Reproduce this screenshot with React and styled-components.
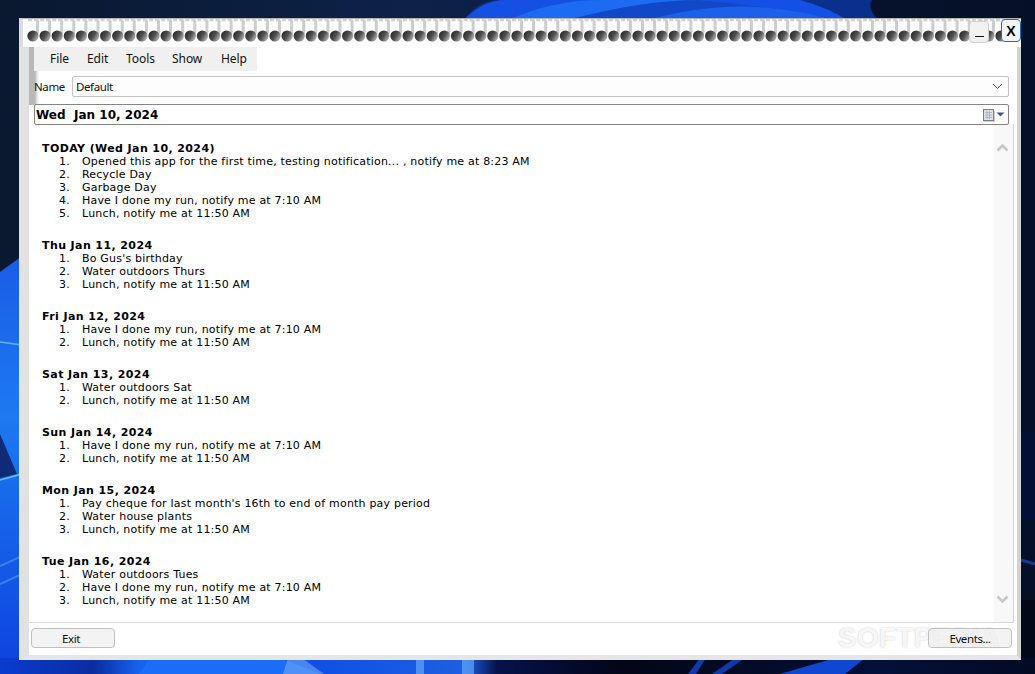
import React from "react";
import styled, { createGlobalStyle } from "styled-components";

const Global = createGlobalStyle`
  html, body { margin: 0; padding: 0; width: 1035px; height: 674px; overflow: hidden; background: #07142c; }
`;

const Desktop = styled.div`
  position: relative;
  width: 1035px;
  height: 674px;
  overflow: hidden;
`;

const Window = styled.div`
  position: absolute;
  left: 19px;
  top: 18px;
  width: 1002px;
  height: 642px;
  display: flex;
  flex-direction: column;
  background: #fff;
`;

const Spiral = styled.div`
  position: relative;
  height: 29px;
  flex: none;
  background: #fff;
  border-top: 1px solid #b4b4b4;
  border-left: 4px solid #dcdcdc;
  box-sizing: border-box;
`;

const Frame = styled.div`
  flex: 1;
  min-height: 0;
  display: flex;
  flex-direction: column;
  box-sizing: border-box;
  border-left: 10px solid #e2e2e2;
  border-right: 4px solid #d2d2d2;
  border-bottom: 5px solid #e6e6e6;
  background:
    linear-gradient(90deg, #b8b8b8 0, #b8b8b8 6px, #e4e4e4 8px, #ffffff 10px) 0 0 / 10px 58px no-repeat,
    #fff;
`;

const TitleButtons = styled.div`
  position: absolute;
  right: 0;
  top: 0;
  display: flex;
  align-items: flex-start;
  gap: 12px;
`;

const TitleButton = styled.button`
  box-sizing: border-box;
  padding: 0;
  display: flex;
  align-items: center;
  justify-content: center;
  font-family: "Liberation Sans", sans-serif;
  font-weight: 700;
  color: #000;
  border-radius: 4px;
  width: 20px;
  height: ${(p) => (p.$close ? "23px" : "22px")};
  margin-top: ${(p) => (p.$close ? "0" : "2px")};
  font-size: 14px;
  background: ${(p) => (p.$close ? "#f2f6fb" : "#f2f2f2")};
  border: 1px solid ${(p) => (p.$close ? "#0a73cf" : "#cfcfcf")};
`;

const Dash = styled.span`
  display: block;
  width: 9px;
  height: 1px;
  margin-top: 8px;
  background: #111;
`;

const MenuBar = styled.div`
  display: flex;
  align-items: center;
  flex: none;
  box-sizing: border-box;
  width: 223px;
  height: 24px;
  margin-left: 5px;
  padding: 0 0 2px 16px;
  background: #f0f0f0;
  font: 12px "Noto Sans", sans-serif;
  letter-spacing: -0.05px;
  color: #111;
`;

const MenuItem = styled.span`
  width: ${(p) => p.$w}px;
`;

const NameRow = styled.div`
  display: flex;
  align-items: center;
  height: 21px;
  margin: 5px 0 0 5px;
  flex: none;
`;

const NameLabel = styled.label`
  width: 38px;
  font: 11.5px "Noto Sans", sans-serif;
  letter-spacing: -0.4px;
  color: #111;
`;

const NameSelect = styled.div`
  box-sizing: border-box;
  width: 937px;
  height: 21px;
  display: flex;
  align-items: center;
  justify-content: space-between;
  padding: 0 5px 0 3px;
  background: #fdfdfd;
  border: 1px solid #c4c4c4;
  border-radius: 2px;
  font: 11.5px "Noto Sans", sans-serif;
  letter-spacing: -0.4px;
  color: #111;
`;

const DateRow = styled.div`
  box-sizing: border-box;
  flex: none;
  width: 975px;
  height: 21px;
  margin: 7px 0 0 5px;
  display: flex;
  align-items: center;
  justify-content: space-between;
  padding: 1px 3px 0 1px;
  background: #fff;
  border: 1px solid #858585;
  border-radius: 2px;
  font: 700 12px "DejaVu Sans", sans-serif;
  letter-spacing: 0.02px;
  color: #000;
  white-space: pre;
  position: relative;
  z-index: 1;
`;

const Panel = styled.div`
  box-sizing: border-box;
  flex: none;
  width: 985px;
  height: 499px;
  margin-top: -1px;
  display: flex;
  background: #fff;
  border-right: 1px solid #d4d4d4;
  border-bottom: 1px solid #d4d4d4;
`;

const Agenda = styled.div`
  flex: 1;
  min-width: 0;
  padding: 18px 0 0 13px;
  font: 11px/13px "DejaVu Sans", Verdana, sans-serif;
  letter-spacing: 0.2px;
  color: #000;
`;

const Day = styled.section`
  margin-bottom: 19px;
`;

const DayTitle = styled.div`
  font-weight: 700;
  letter-spacing: 0.4px;
`;

const TaskList = styled.ol`
  margin: 0;
  padding: 0;
  list-style: none;
`;

const Task = styled.li`
  display: flex;
`;

const TaskNum = styled.span`
  flex: none;
  width: 23px;
  margin-left: 17px;
`;

const Gutter = styled.div`
  flex: none;
  width: 19px;
  display: flex;
  flex-direction: column;
  justify-content: space-between;
  align-items: center;
  padding: 19px 2px 18px 0;
  box-sizing: border-box;
  background: #f8f8f8;
`;

const Footer = styled.div`
  position: relative;
  flex: 1;
  display: flex;
  justify-content: space-between;
  align-items: flex-start;
  padding: 5px 5px 0 2px;
  background: #fff;
`;

const Button = styled.button`
  position: relative;
  z-index: 1;
  box-sizing: border-box;
  width: 84px;
  height: 20px;
  padding: 0 ${(p) => (p.$shift ? "4px" : "0")} 0 0;
  background: rgba(238, 238, 238, 0.72);
  border: 1px solid #c0c0c0;
  border-radius: 4px;
  font: 11.5px "Noto Sans", sans-serif;
  letter-spacing: -0.4px;
  color: #111;
`;

const Watermark = styled.div`
  position: absolute;
  left: 809px;
  top: 0px;
  font: 700 28px/30px "Liberation Sans", sans-serif;
  letter-spacing: 0.2px;
  color: rgba(255, 255, 255, 0.9);
  text-shadow: 0 0 1.5px rgba(130, 130, 130, 0.55);
  pointer-events: none;
`;

const WallpaperSvg = styled.svg`
  position: absolute;
  inset: 0;
  display: block;
`;

function Wallpaper() {
  return (
    <WallpaperSvg width="1035" height="674" viewBox="0 0 1035 674">
      <defs>
        <linearGradient id="sky" x1="0" y1="0" x2="1" y2="0">
          <stop offset="0" stopColor="#0a1830" />
          <stop offset="0.4" stopColor="#0c2248" />
          <stop offset="0.85" stopColor="#06122c" />
          <stop offset="1" stopColor="#051026" />
        </linearGradient>
        <linearGradient id="leftBlue" x1="0" y1="0" x2="0" y2="1">
          <stop offset="0" stopColor="#1a5ce6" />
          <stop offset="0.4" stopColor="#1d7af0" />
          <stop offset="1" stopColor="#0e45e0" />
        </linearGradient>
        <linearGradient id="bottomBar" x1="0" y1="0" x2="1" y2="0">
          <stop offset="0" stopColor="#0a3cd0" />
          <stop offset="0.09" stopColor="#0b2da0" />
          <stop offset="0.135" stopColor="#1663f0" />
          <stop offset="0.3" stopColor="#0f4fe6" />
          <stop offset="0.45" stopColor="#1f5fe0" />
          <stop offset="0.48" stopColor="#06124a" />
          <stop offset="0.6" stopColor="#020616" />
          <stop offset="0.85" stopColor="#041038" />
          <stop offset="1" stopColor="#030a24" />
        </linearGradient>
      </defs>
      <rect width="1035" height="674" fill="url(#sky)" />
      <path d="M462 22 Q478 0 498 0 L872 0 Q866 8 880 22 Z" fill="#0a2f8c" />
      <path d="M462 22 Q482 0 505 0 L800 0 Q830 8 850 22 Z" fill="#1450e4" />
      <path d="M505 22 Q550 0 600 0 L700 0 Q770 6 800 22 Z" fill="#1d6bf0" />
      <path d="M560 22 Q640 0 700 0 Q770 6 850 22 Z" fill="#1048c8" />
      <path d="M640 22 Q710 2 770 8 Q810 12 840 22 Z" fill="#1a60ea" />
      <path d="M0 272 L22 256 L22 660 L0 660 Z" fill="url(#leftBlue)" />
      <path d="M0 342 L22 345" stroke="#5cb4f8" strokeWidth="1.5" fill="none" />
      <path d="M0 434 L17 474 L0 478 Z" fill="#102a78" />
      <path d="M0 480 L22 474" stroke="#6cc0f8" strokeWidth="1.5" fill="none" />
      <path d="M0 566 L22 556 M0 584 L22 574" stroke="#3b7ef0" strokeWidth="2" fill="none" />
      <path d="M1021 430 L1035 432 L1035 520 L1021 520 Z" fill="#03103a" opacity="0.7" />
      <path d="M1021 560 L1035 564" stroke="#123a9a" strokeWidth="3" fill="none" />
      <rect x="1021" y="600" width="14" height="74" fill="#020818" />
      <rect y="658" width="1035" height="16" fill="url(#bottomBar)" />
      <path d="M139 674 L150 658 L280 658 L320 674 Z" fill="#1b6cf6" />
      <path d="M283 674 L288 658 L302 658 L324 674 Z" fill="#7cb0fa" opacity="0.55" />
      <path d="M416 658 h8 v16 h-8 Z M462 658 h12 v16 h-12 Z" fill="#63a6f8" opacity="0.7" />
      <path d="M688 674 L700 658 L706 658 L696 674 Z M712 674 L735 658 L745 658 L722 674 Z" fill="#0f3aa8" />
      <path d="M780 674 L835 658 L865 658 L845 674 Z" fill="#0f47d0" />
    </WallpaperSvg>
  );
}

function SpiralRings() {
  const holes = Array.from({ length: 82 }, (_, i) => 10 + i * 12.1);
  return (
    <svg width="998" height="28" viewBox="0 0 998 28" style={{ display: "block" }}>
      <defs>
        <linearGradient id="hole" x1="0" y1="0.2" x2="1" y2="0.8">
          <stop offset="0" stopColor="#252525" />
          <stop offset="0.5" stopColor="#505050" />
          <stop offset="1" stopColor="#c4c4c4" />
        </linearGradient>
      </defs>
      {holes.map((x) => (
        <g key={x}>
          <path d={`M${x + 4.5} 1 V13 Q${x + 4.5} 15 ${x + 2} 15`} stroke="#cdcdcd" strokeWidth="3" fill="none" />
          <path d={`M${x - 5} 1 H${x + 7}`} stroke="#d0d0d0" strokeWidth="2.4" strokeDasharray="4 2" />
          <circle cx={x} cy="17" r="5.6" fill="url(#hole)" />
        </g>
      ))}
    </svg>
  );
}

const days = [
  { t: "TODAY (Wed Jan 10, 2024)", i: ["Opened this app for the first time, testing notification... , notify me at 8:23 AM", "Recycle Day", "Garbage Day", "Have I done my run, notify me at 7:10 AM", "Lunch, notify me at 11:50 AM"] },
  { t: "Thu Jan 11, 2024", i: ["Bo Gus's birthday", "Water outdoors Thurs", "Lunch, notify me at 11:50 AM"] },
  { t: "Fri Jan 12, 2024", i: ["Have I done my run, notify me at 7:10 AM", "Lunch, notify me at 11:50 AM"] },
  { t: "Sat Jan 13, 2024", i: ["Water outdoors Sat", "Lunch, notify me at 11:50 AM"] },
  { t: "Sun Jan 14, 2024", i: ["Have I done my run, notify me at 7:10 AM", "Lunch, notify me at 11:50 AM"] },
  { t: "Mon Jan 15, 2024", i: ["Pay cheque for last month's 16th to end of month pay period", "Water house plants", "Lunch, notify me at 11:50 AM"] },
  { t: "Tue Jan 16, 2024", i: ["Water outdoors Tues", "Have I done my run, notify me at 7:10 AM", "Lunch, notify me at 11:50 AM"] },
];

const menus = [["File", 37], ["Edit", 39], ["Tools", 46], ["Show", 49], ["Help", 30]];

export default function App() {
  return (
    <Desktop>
      <Global />
      <Wallpaper />
      <Window>
        <Spiral>
          <SpiralRings />
          <TitleButtons>
            <TitleButton aria-label="Minimize"><Dash /></TitleButton>
            <TitleButton $close>X</TitleButton>
          </TitleButtons>
        </Spiral>
        <Frame>
          <MenuBar>
            {menus.map(([m, w]) => <MenuItem key={m} $w={w}>{m}</MenuItem>)}
          </MenuBar>
          <NameRow>
            <NameLabel>Name</NameLabel>
            <NameSelect>
              Default
              <svg width="11" height="7" viewBox="0 0 11 7"><path d="M1 1l4.5 4.5L10 1" stroke="#555" fill="none" /></svg>
            </NameSelect>
          </NameRow>
          <DateRow>
            {"Wed  Jan 10, 2024"}
            <svg width="22" height="15" viewBox="0 0 22 15">
              <rect x="0.5" y="1.5" width="10" height="11" fill="#dde2ec" stroke="#7d7d7d" />
              <path d="M2 4.5h7M2 7h7M2 9.5h7M4 3v8M6.5 3v8" stroke="#a6adbd" strokeWidth="0.8" />
              <path d="M1 13.5h11M11.5 3v10" stroke="#cfcfcf" />
              <path d="M13.5 4.5h8l-4 4z" fill="#46598a" />
            </svg>
          </DateRow>
          <Panel>
            <Agenda>
              {days.map((d) => (
                <Day key={d.t}>
                  <DayTitle>{d.t}</DayTitle>
                  <TaskList>
                    {d.i.map((x, n) => (
                      <Task key={n}><TaskNum>{n + 1}.</TaskNum><span>{x}</span></Task>
                    ))}
                  </TaskList>
                </Day>
              ))}
            </Agenda>
            <Gutter>
              <svg width="13" height="9" viewBox="0 0 13 9"><path d="M1.5 7.5l5-5 5 5" stroke="#c6c6c6" strokeWidth="2.6" fill="none" /></svg>
              <svg width="13" height="9" viewBox="0 0 13 9"><path d="M1.5 1.5l5 5 5-5" stroke="#c6c6c6" strokeWidth="2.6" fill="none" /></svg>
            </Gutter>
          </Panel>
          <Footer>
            <Button $shift>Exit</Button>
            <Button>Events...</Button>
            <Watermark>SOFTPEDIA</Watermark>
          </Footer>
        </Frame>
      </Window>
    </Desktop>
  );
}
